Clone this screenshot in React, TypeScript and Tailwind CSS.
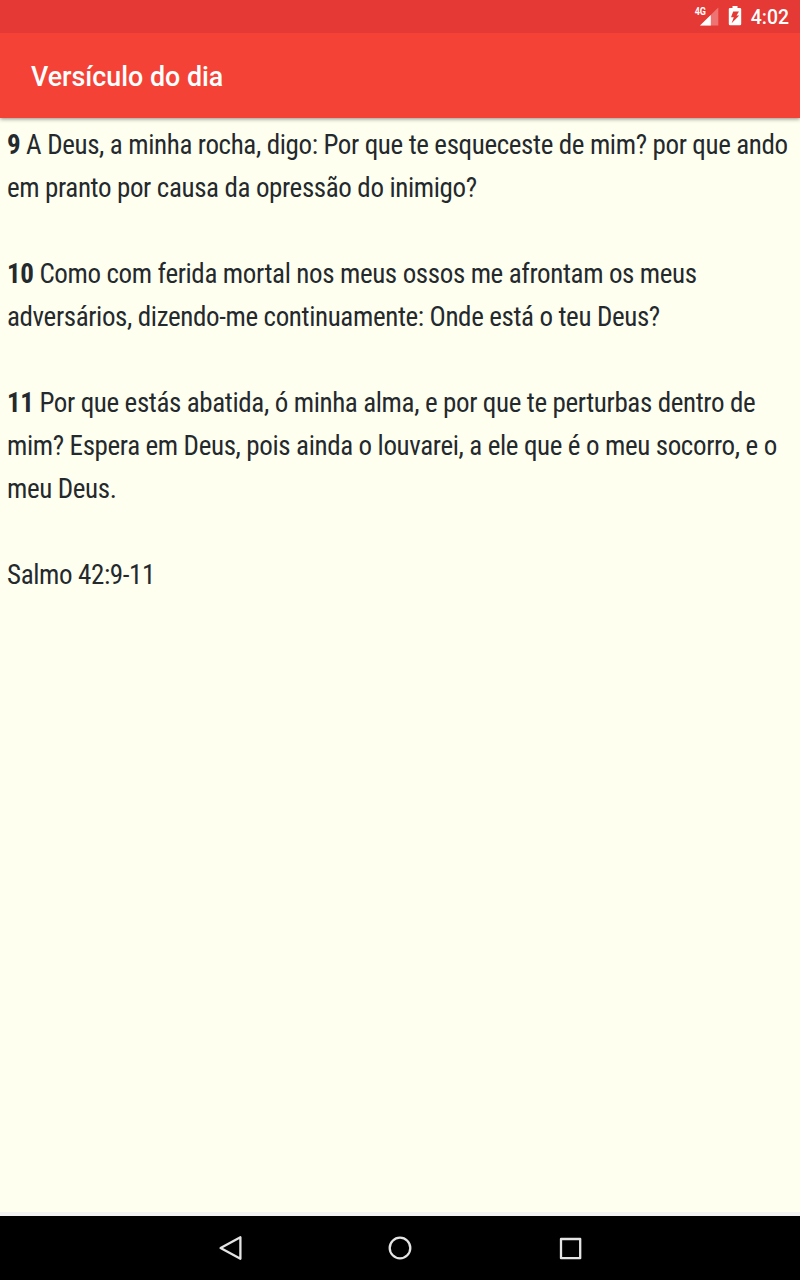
interface Verse {
  number: string;
  lines: string[];
}

const verses: Verse[] = [
  {
    number: '9',
    lines: [
      'A Deus, a minha rocha, digo: Por que te esqueceste de mim? por que ando',
      'em pranto por causa da opressão do inimigo?',
    ],
  },
  {
    number: '10',
    lines: [
      'Como com ferida mortal nos meus ossos me afrontam os meus',
      'adversários, dizendo-me continuamente: Onde está o teu Deus?',
    ],
  },
  {
    number: '11',
    lines: [
      'Por que estás abatida, ó minha alma, e por que te perturbas dentro de',
      'mim? Espera em Deus, pois ainda o louvarei, a ele que é o meu socorro, e o',
      'meu Deus.',
    ],
  },
];

function StatusBar() {
  return (
    <div className="relative z-10 flex h-[33px] shrink-0 items-center justify-end bg-[#e53935] pr-[11px] text-white">
      {/* Signal */}
      <svg className="h-[33px] w-[26px]" viewBox="0 0 26 33" fill="currentColor">
        <path d="M24.3 7.5v18H6z" opacity="0.3" />
        <path d="M16.8 15v10.5H6z" />
        <text x="0.7" y="15.2" fontSize="10.4" fontWeight="700" textLength="11.3" lengthAdjust="spacingAndGlyphs">
          4G
        </text>
      </svg>
      {/* Battery */}
      <svg className="ml-2 h-[33px] w-[15px]" viewBox="0 0 15 33" fill="currentColor">
        <path
          fillRule="evenodd"
          d="M4.5 6h5v2h2.5q1.2 0 1.2 1v15q0 1.2-1.2 1.2h-10q-1.2 0-1.2-1.2v-15q0-1 1.2-1h2.5zM5.2 11.5L3 17.2h2.8L3.6 23.2L11.2 15.6H8.5L11 11.5z"
        />
      </svg>
      <span className="ml-[8px] mt-0.5 text-[19.4px] font-medium leading-[33px]">4:02</span>
    </div>
  );
}

function NavigationBar() {
  return (
    <nav className="flex h-16 shrink-0 items-center justify-center gap-[138px] bg-black text-[#e4e4e4]">
      <svg className="size-8" viewBox="0 0 32 32" fill="none" stroke="currentColor" strokeWidth="2.3" strokeLinejoin="round">
        <path d="M26.4 5.2v21.6L6.6 16z" />
      </svg>
      <svg className="size-8" viewBox="0 0 32 32" fill="none" stroke="currentColor" strokeWidth="2.3">
        <circle cx="16" cy="16" r="10.3" />
      </svg>
      <svg className="size-8" viewBox="0 0 32 32" fill="none" stroke="currentColor" strokeWidth="2.3" strokeLinejoin="round">
        <path d="M7 7h19.2v19.2h-19.2z" />
      </svg>
    </nav>
  );
}

export default function App() {
  return (
    <div className="flex h-[1280px] w-[800px] flex-col bg-[#fffff0] font-[Roboto,sans-serif]">
      <StatusBar />

      <header className="flex h-[85px] shrink-0 items-center bg-[#f44336] pl-[31px] pt-1 shadow-[0_1px_4px_rgba(0,0,0,0.45)]">
        <h1 className="text-[26.8px] font-medium text-white">Versículo do dia</h1>
      </header>

      <main className="flex-1 whitespace-nowrap border-b-4 border-[#f3f3f3] pl-[7px] pt-[6px] text-[27px] leading-[43px] tracking-[-0.37px] text-[#24292d] [font-stretch:75%]">
        {verses.map((verse) => (
          <p key={verse.number} className="mb-[43px]">
            <b>{verse.number}</b>{' '}
            {verse.lines.map((line) => (
              <span key={line}>
                {line}
                <br />
              </span>
            ))}
          </p>
        ))}
        <p>Salmo 42:9-11</p>
      </main>

      <NavigationBar />
    </div>
  );
}
